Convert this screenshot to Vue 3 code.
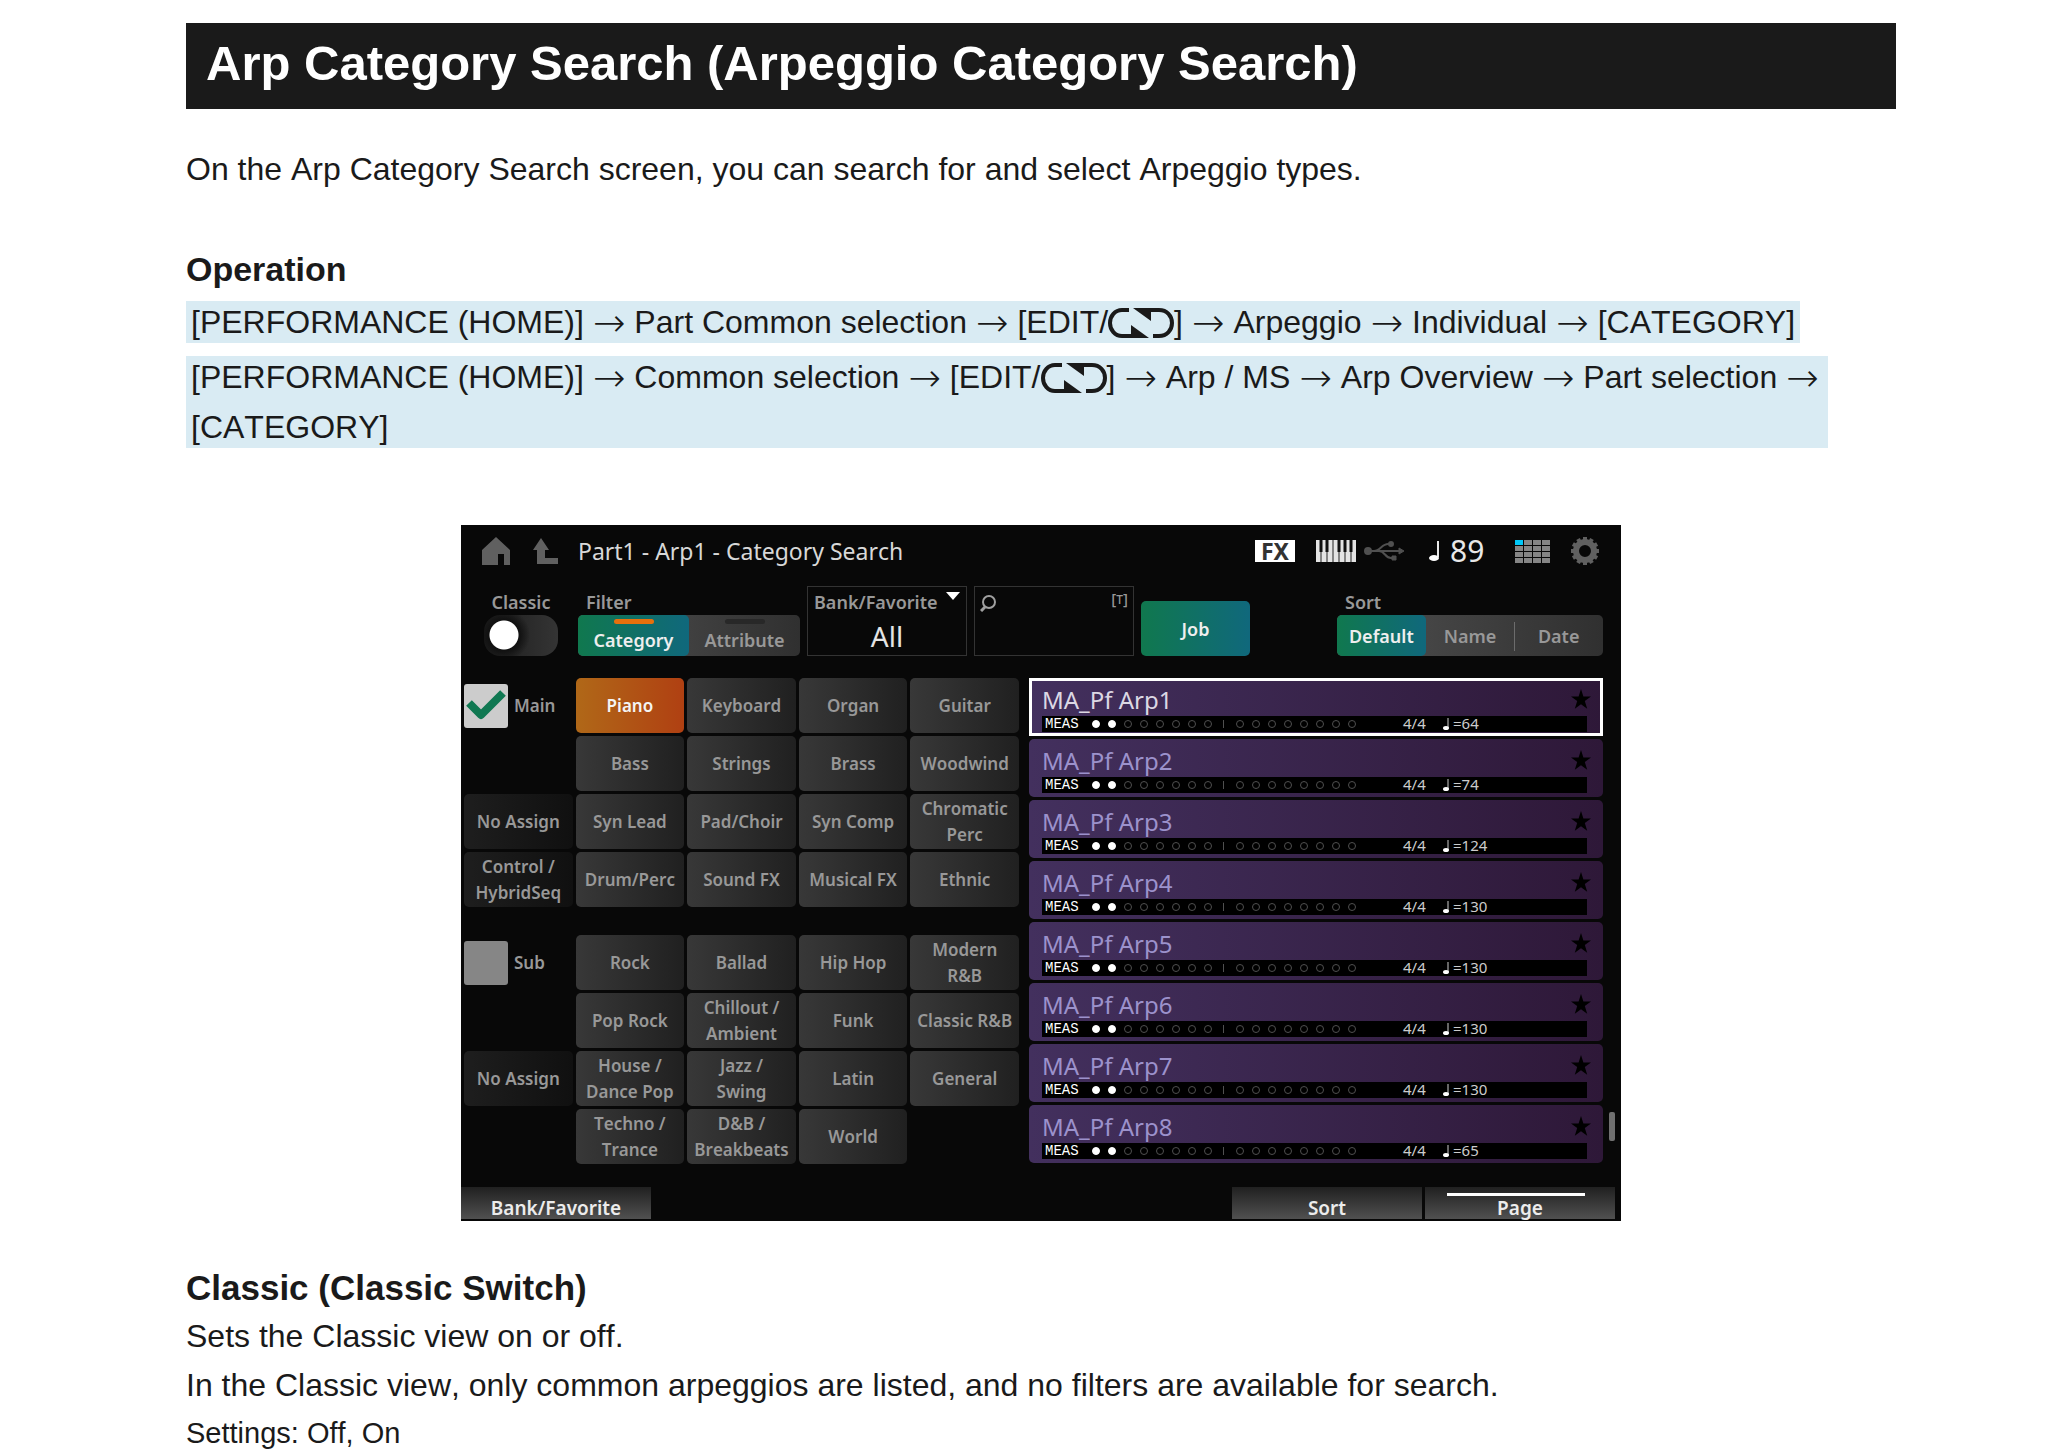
<script setup>
import { ref } from 'vue'

const mainCells = [
  null, 'Piano', 'Keyboard', 'Organ', 'Guitar',
  null, 'Bass', 'Strings', 'Brass', 'Woodwind',
  'No Assign', 'Syn Lead', 'Pad/Choir', 'Syn Comp', 'Chromatic\nPerc',
  'Control /\nHybridSeq', 'Drum/Perc', 'Sound FX', 'Musical FX', 'Ethnic',
]
const subCells = [
  null, 'Rock', 'Ballad', 'Hip Hop', 'Modern\nR&B',
  null, 'Pop Rock', 'Chillout /\nAmbient', 'Funk', 'Classic R&B',
  'No Assign', 'House /\nDance Pop', 'Jazz /\nSwing', 'Latin', 'General',
  null, 'Techno /\nTrance', 'D&B /\nBreakbeats', 'World', null,
]
const groups = ref([
  { name: 'Main', on: true, cells: mainCells },
  { name: 'Sub', on: false, cells: subCells },
])
const tempos = [64, 74, 124, 130, 130, 130, 130, 65]
const category = ref('Piano')
const arp = ref(0)
const classic = ref(false)
const teeth = Array.from({ length: 12 }, (_, i) => i * 30)
</script>

<template>
  <main class="page">
    <h1>Arp Category Search (Arpeggio Category Search)</h1>
    <p class="intro">On the Arp Category Search screen, you can search for and select Arpeggio types.</p>

    <h2 class="operation">Operation</h2>
    <div class="path">
      [PERFORMANCE (HOME)] <span class="arrow">→</span> Part Common selection <span class="arrow">→</span> [EDIT/<svg class="swap" viewBox="0 0 66 30" aria-hidden="true"><path d="M21 2H14C7 2 2 8 2 15s5 13 12 13h12M45 28h6c8 0 13-6 13-13S59 2 51 2H38" fill="none" stroke="currentColor" stroke-width="4" /><path d="M23 17l18 13H23zM25 0h18v13z" fill="currentColor" /></svg>] <span class="arrow">→</span> Arpeggio <span class="arrow">→</span> Individual <span class="arrow">→</span> [CATEGORY]
    </div>
    <div class="path">
      [PERFORMANCE (HOME)] <span class="arrow">→</span> Common selection <span class="arrow">→</span> [EDIT/<svg class="swap" viewBox="0 0 66 30" aria-hidden="true"><path d="M21 2H14C7 2 2 8 2 15s5 13 12 13h12M45 28h6c8 0 13-6 13-13S59 2 51 2H38" fill="none" stroke="currentColor" stroke-width="4" /><path d="M23 17l18 13H23zM25 0h18v13z" fill="currentColor" /></svg>] <span class="arrow">→</span> Arp / MS <span class="arrow">→</span> Arp Overview <span class="arrow">→</span> Part selection <span class="arrow">→</span> [CATEGORY]
    </div>

    <section class="device">
      <header class="top">
        <svg class="home" viewBox="0 0 28 28"><path d="M14 0l14 13v15h-6V17h-6v11H0V13z" fill="#606060" /></svg>
        <svg class="up" viewBox="0 0 25 26"><path d="M8 0l8 12h-4v8h13v6H4V12H0z" fill="#606060" /></svg>
        <span class="screen-title">Part1 - Arp1 - Category Search</span>
        <span class="fx">FX</span>
        <svg class="keys" viewBox="0 0 40 22">
          <path d="M0 0h40v22H0z" fill="#e4e4e4" />
          <path d="M5 0v22M11 0v22M17 0v22M23 0v22M29 0v22M35 0v22" stroke="#222" />
          <path d="M5 0v12M11 0v12M23 0v12M29 0v12M35 0v12" stroke="#111" stroke-width="3" />
        </svg>
        <svg class="usb" viewBox="0 0 42 20" fill="none" stroke="#505050" stroke-width="2">
          <path d="M3 10h32M10 10c6 0 8-7 14-7h3M15 10c6 0 6 7 12 7h4" />
          <circle cx="4" cy="10" r="3" fill="#505050" /><circle cx="27" cy="3" r="2" fill="#505050" />
          <path d="M28 15h4v4h-4zM35 7l5 3-5 3z" fill="#505050" stroke-width="1" />
        </svg>
        <svg class="note" viewBox="0 0 10 20"><path d="M9 0v16" stroke="#e8e8e8" stroke-width="2" /><ellipse cx="5" cy="17" rx="5" ry="3" fill="#fff" /></svg>
        <span class="tempo">89</span>
        <svg class="pads" viewBox="0 0 35 23">
          <template v-for="r in 4" :key="r">
            <rect v-for="c in 4" :key="c" :x="(c - 1) * 9" :y="(r - 1) * 6" width="8" height="5" :fill="r + c === 2 ? '#00c8f8' : '#858585'" />
          </template>
        </svg>
        <svg class="gear" viewBox="0 0 28 28">
          <circle cx="14" cy="14" r="9" fill="none" stroke="#606060" stroke-width="6" />
          <rect v-for="t in teeth" :key="t" x="12" y="0" width="4" height="4" fill="#606060" :transform="`rotate(${t} 14 14)`" />
        </svg>
      </header>

      <div class="tools">
        <label class="classic">
          <span>Classic</span>
          <input v-model="classic" type="checkbox" class="switch">
        </label>
        <div class="filter">
          <span class="caption">Filter</span>
          <div class="seg">
            <button class="on lamp">Category</button>
            <button class="lamp">Attribute</button>
          </div>
        </div>
        <label class="box bank">
          <span>Bank/Favorite</span>
          <svg class="caret" viewBox="0 0 14 8"><path d="M0 0h14L7 8z" fill="#fff" /></svg>
          <select><option>All</option></select>
        </label>
        <label class="box search">
          <svg class="lens" viewBox="0 0 16 17" fill="none" stroke="#a0a0a0"><circle cx="9" cy="7" r="6" stroke-width="2" /><path d="M5 12l-4 4" stroke-width="3" /></svg>
          <span class="kbd">[<small>T</small>]</span>
          <input type="text" aria-label="Search">
        </label>
        <button class="job">Job</button>
        <div class="sort">
          <span class="caption">Sort</span>
          <div class="seg">
            <button class="on">Default</button>
            <button>Name</button>
            <button class="ruled">Date</button>
          </div>
        </div>
      </div>

      <div class="body">
        <div class="groups">
          <div v-for="g in groups" :key="g.name" class="grid">
            <template v-for="(c, i) in g.cells" :key="i">
              <label v-if="i === 0" class="check">
                <input v-model="g.on" type="checkbox">
                <svg v-if="g.on" class="tick" viewBox="0 0 44 44"><path d="M5 20l12 12L39 10" fill="none" stroke="#107852" stroke-width="8" stroke-linejoin="round" /></svg>
                <span>{{ g.name }}</span>
              </label>
              <span v-else-if="!c" />
              <button v-else class="cell" :class="{ dim: i % 5 === 0, hot: c === category }" @click="category = c">{{ c }}</button>
            </template>
          </div>
        </div>

        <div class="list">
          <button v-for="(t, i) in tempos" :key="i" class="row" :class="{ current: i === arp }" @click="arp = i">
            <span class="name">MA_Pf Arp{{ i + 1 }}</span>
            <svg class="star" viewBox="0 0 20 20"><path d="M10 0l2.400 7.400H20l-6.200 4.600 2.400 7.800L10 15.200l-6.200 4.600L6.200 12 0 7.400h7.600z" /></svg>
            <span class="meas">
              <span class="tag">MEAS</span>
              <span class="dots">
                <i v-for="d in 17" :key="d" :class="{ full: d < 3, sep: d === 9 }" />
              </span>
              <span class="sig">4/4</span>
              <svg class="mini" viewBox="0 0 6 12"><path d="M5 0v10" stroke="#ccc" /><ellipse cx="3" cy="10" rx="3" ry="2" fill="#fff" /></svg>
              <span class="bpm">={{ t }}</span>
            </span>
          </button>
        </div>
        <div class="rail"><div class="thumb" /></div>
      </div>

      <footer class="tabs">
        <button>Bank/Favorite</button>
        <span class="fill" />
        <button>Sort</button>
        <button class="lit">Page</button>
      </footer>
    </section>

    <h2 class="classic-title">Classic (Classic Switch)</h2>
    <p>Sets the Classic view on or off.</p>
    <p>In the Classic view, only common arpeggios are listed, and no filters are available for search.</p>
    <p class="settings">Settings: Off, On</p>
  </main>
</template>

<style>
body { margin: 0; background: #fff; }
</style>

<style scoped>
* { box-sizing: border-box; }
.page {
  padding: 23px 174px 0 186px;
  font-family: "Liberation Sans", Arial, sans-serif;
  font-size: 32px;
  font-kerning: none;
  line-height: 49px;
  color: #1a1a1a;
}
h1 {
  margin: 0;
  height: 86px;
  padding: 0 20px;
  background: #1a1a1a;
  color: #fff;
  font-size: 49px;
  line-height: 80px;
}
p { margin: 0; }
.intro { margin-top: 36px; }
h2 { margin: 0; }
.operation { margin: 51px 0 7px; font-size: 34px; }
.path {
  width: fit-content;
  max-width: 96%;
  margin-bottom: 13px;
  padding: 0 5px;
  background: #d9ebf3;
  line-height: 50px;
}
.path::before, .path::after { content: ""; display: table; }
.path::before { margin-bottom: -4px; }
.path::after { margin-top: -4px; }
.arrow { font-family: "DejaVu Sans", sans-serif; font-weight: 200; font-size: 39px; line-height: 0; vertical-align: -3px; }
.swap { width: 66px; height: 30px; vertical-align: -5px; }

button, input, select { font: inherit; color: inherit; border: 0; padding: 0; margin: 0; background: none; }
.device {
  width: 100%;
  max-width: 1160px;
  margin: 77px auto 0;
  background: #080808;
  color: #989898;
  font-family: "Noto Sans", "Open Sans", sans-serif;
  font-size: 18px;
  font-weight: 500;
  line-height: 26px;
}
.device svg { display: block; flex: none; }
.top { display: flex; align-items: center; height: 52px; padding: 0 22px 0 21px; }
.home { width: 28px; height: 28px; }
.up { width: 25px; height: 26px; margin-left: 23px; }
.screen-title { flex: 1; margin-left: 20px; font-size: 23px; font-weight: 400; color: #d8d8d8; }
.fx { width: 40px; height: 22px; background: #fff; color: #333; font-size: 23px; line-height: 22px; font-weight: 700; text-align: center; }
.keys { width: 40px; height: 22px; margin-left: 21px; }
.usb { width: 42px; height: 20px; margin-left: 8px; }
.note { width: 10px; height: 20px; margin-left: 23px; }
.tempo { width: 40px; margin-left: 11px; font-size: 30px; font-weight: 400; color: #e8e8e8; }
.pads { width: 35px; height: 23px; margin-left: 25px; }
.gear { width: 28px; height: 28px; margin-left: 21px; }

.tools { display: flex; align-items: flex-end; height: 79px; padding: 0 18px 0 23px; }
.classic { display: flex; flex-direction: column; width: 74px; text-align: center; font-weight: 600; }
.switch {
  appearance: none;
  width: 74px;
  height: 41px;
  border-radius: 16px;
  background: radial-gradient(circle at 20px 20px, #fff 14px, #101010 15px, transparent 26px), linear-gradient(90deg, #1c1c1c, #343434);
}
.filter { width: 222px; margin-left: 20px; }
.caption { display: block; padding-left: 8px; font-weight: 600; }
.seg { display: flex; height: 41px; border-radius: 5px; background: linear-gradient(90deg, #505050, #303030); }
.seg button { position: relative; flex: 1; font-weight: 600; }
.seg .on, .job { border-radius: 5px; background: linear-gradient(90deg, #10784e, #10687c); color: #eee; font-weight: 600; }
.seg .lamp { padding-top: 9px; }
.lamp::before { content: ""; position: absolute; top: 4px; left: 36px; width: 40px; height: 5px; border-radius: 3px; background: #282828; }
.lamp.on::before { background: #e8700c; }
.box { position: relative; width: 160px; height: 70px; border: 1px solid #333; }
.bank { margin-left: 7px; padding: 2px 6px; font-weight: 600; }
.bank span { display: block; white-space: nowrap; }
.caret { position: absolute; top: 5px; right: 6px; width: 14px; height: 8px; }
.bank select { appearance: none; display: block; width: 100%; height: 42px; font-size: 28px; font-weight: 400; color: #e4e4e4; text-align: center; text-align-last: center; }
.search { display: flex; flex-wrap: wrap; justify-content: space-between; margin-left: 7px; padding: 0 5px; }
.lens { width: 16px; height: 17px; margin-top: 8px; }
.kbd { font-size: 15px; line-height: 22px; }
.kbd small { font-size: 12px; }
.search input { width: 100%; height: 36px; outline: 0; }
.job { width: 109px; height: 55px; margin-left: 7px; }
.sort { width: 266px; margin-left: auto; }
.ruled::before { content: ""; position: absolute; left: 0; top: 7px; width: 1px; height: 29px; background: #6c6c6c; }

.body { display: flex; height: 509px; padding: 22px 6px 0 3px; }
.groups { width: 555px; font-size: 17px; font-weight: 600; }
.grid { display: grid; grid-template-columns: repeat(5, 1fr); grid-auto-rows: 55px; gap: 3px; margin-bottom: 28px; }
.cell { border-radius: 5px; background: linear-gradient(90deg, #383838, #202020); white-space: pre-line; }
.dim { background: linear-gradient(90deg, #1e1e1e, #101010); }
.hot { background: linear-gradient(90deg, #b06818, #b04012); color: #f4f4f4; }
.check { position: relative; display: flex; align-items: center; gap: 6px; }
.check input { appearance: none; width: 44px; height: 44px; border-radius: 3px; background: #868686; }
.check input:checked { background: #ccc; }
.tick { position: absolute; left: 0; top: 5px; width: 44px; height: 44px; }

.list { display: flex; flex-direction: column; gap: 3px; flex: 1; margin-left: 10px; }
.row {
  display: flex;
  flex-wrap: wrap;
  align-content: flex-start;
  justify-content: space-between;
  height: 58px;
  padding: 6px 12px 0 13px;
  border-radius: 5px;
  background: linear-gradient(90deg, #43305e, #2e1838);
  text-align: left;
}
.current { border-radius: 0; box-shadow: inset 0 0 0 3px #fff; }
.name { height: 32px; font-size: 24px; line-height: 32px; font-weight: 400; color: #9c92cc; }
.current .name { color: #dcd8e4; }
.star { width: 20px; height: 20px; margin-top: 5px; }
.meas { display: flex; align-items: center; width: 100%; height: 16px; margin-right: 4px; padding-left: 3px; background: #000; font-size: 15px; line-height: 14px; font-weight: 400; color: #ccc; }
.tag { width: 43px; font-family: "Liberation Mono", monospace; font-size: 14px; color: #fff; }
.dots { display: flex; width: 272px; }
.dots i { width: 8px; height: 8px; margin: 0 4px; border: 1px solid #505050; border-radius: 50%; }
.dots .full { background: #fff; border-color: #fff; }
.dots .sep { width: 1px; margin: 0 8px 0 7px; border: 0; border-radius: 0; background: #505050; }
.sig { width: 40px; margin-left: 43px; }
.mini { width: 6px; height: 12px; }
.sig, .bpm { height: 16px; }
.bpm { margin-left: 4px; }
.rail { display: flex; flex-direction: column; justify-content: flex-end; width: 12px; padding: 0 0 24px 6px; }
.thumb { width: 6px; height: 29px; border-radius: 2px; background: #707070; }

.tabs { display: flex; gap: 3px; height: 56px; padding: 22px 6px 2px 0; }
.tabs button { position: relative; width: 190px; padding-top: 9px; background: linear-gradient(#202020, #505050); color: #ececec; font-size: 19px; font-weight: 600; line-height: 22px; }
.fill { flex: 1; }
.lit::before { content: ""; position: absolute; top: 6px; left: 22px; right: 30px; height: 3px; background: #fff; }

.classic-title { margin-top: 42px; font-size: 35px; }
.settings { font-size: 29px; line-height: 47px; }
</style>
